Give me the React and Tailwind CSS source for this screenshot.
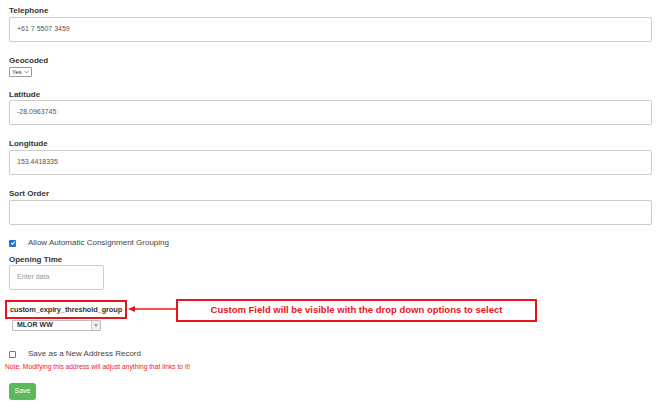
import React from 'react'

const label = "block text-[8px] font-bold leading-[9px] text-[#333]"
const input = "block w-full h-[25px] border border-[#ccc] rounded-[2px] px-[7px] text-[7px] text-[#555] bg-white"

function Field({ name, value, top, gap = 'mb-[1px]' }) {
  return (
    <div className={top}>
      <div className={`${label} ${gap}`}>{name}</div>
      <div className={`${input} flex items-center`}>{value}</div>
    </div>
  )
}

function Check({ checked }) {
  return checked ? (
    <span className="w-[7px] h-[7px] rounded-[1px] bg-[#1a73e8] flex items-center justify-center">
      <svg width="6" height="6" viewBox="0 0 10 10"><path d="M2 5.2 L4.2 7.4 L8 2.8" stroke="white" strokeWidth="1.8" fill="none" /></svg>
    </span>
  ) : (
    <span className="w-[7px] h-[7px] rounded-[1px] border border-[#767676] bg-white" />
  )
}

export default function App() {
  return (
    <div className="w-[670px] h-[408px] bg-white pl-[9px] pr-[18px] pt-[6px] font-['Liberation_Sans',Arial,sans-serif] overflow-hidden">
      <Field name="Telephone" value="+61 7 5507 3459" gap="mb-[2px]" />

      <div className="mt-[14px]">
        <div className={`${label} mb-[2px]`}>Geocoded</div>
        <div className="w-[23px] h-[10px] border border-[#999] rounded-[1px] flex items-center justify-between pl-[2px] pr-[2px] text-[6px] leading-none text-[#333]">
          <span>Yes</span>
          <svg className="shrink-0" width="5" height="4" viewBox="0 0 10 6"><path d="M1 1 L5 5 L9 1" stroke="#555" strokeWidth="1.2" fill="none" /></svg>
        </div>
      </div>

      <Field name="Latitude" value="-28.0963745" top="mt-[13px]" />
      <Field name="Longitude" value="153.4418335" top="mt-[14px]" gap="mb-[2px]" />
      <Field name="Sort Order" value="" top="mt-[14px]" gap="mb-[2px]" />

      <div className="mt-[13px] h-[10px] flex items-center">
        <Check checked />
        <span className="ml-[12px] text-[8px] text-[#444]">Allow Automatic Consignment Grouping</span>
      </div>

      <div className="mt-[7px]">
        <div className={`${label} mb-[1px]`}>Opening Time</div>
        <div className="w-[95px] h-[25px] border border-[#ccc] rounded-[2px] px-[7px] text-[7px] text-[#999] flex items-center">Enter data</div>
      </div>

      <div className="mt-[9px] -ml-[4px] flex items-start">
        <div className="mt-[1px] h-[19px] w-[122px] border-2 border-[#e8141c] flex items-center pl-[3px] text-[7.4px] font-bold text-[#333] whitespace-nowrap tracking-[-0.1px]">
          custom_expiry_threshold_group
        </div>
        <svg className="mt-[6px]" width="49" height="8" viewBox="0 0 49 8">
          <path d="M8 4 H49" stroke="#e8141c" strokeWidth="1.5" />
          <path d="M1 4 L8 1 L8 7 Z" fill="#e8141c" />
        </svg>
        <div className="h-[23px] w-[361px] border-2 border-[#e8141c] flex items-center justify-center text-[9.5px] text-[#e8141c] font-bold">
          Custom Field will be visible with the drop down options to select
        </div>
      </div>

      <div className="-mt-[2px] ml-[3px] w-[89px] h-[11px] border border-[#bbb] rounded-[1px] flex items-center bg-white">
        <span className="flex-1 pl-[4px] text-[7px] font-bold text-[#333]">MLOR WW</span>
        <span className="w-[9px] h-full border-l border-[#ccc] bg-[#eee] flex items-center justify-center">
          <svg width="4" height="3" viewBox="0 0 8 5"><path d="M0 0 H8 L4 5 Z" fill="#888" /></svg>
        </span>
      </div>

      <div className="mt-[18px] h-[10px] flex items-center">
        <Check />
        <span className="ml-[12px] text-[8px] text-[#444]">Save as a New Address Record</span>
      </div>

      <div className="mt-[3px] -ml-[4px] text-[6.7px] text-[#f0141c]">Note: Modifying this address will adjust anything that links to it!</div>

      <div className="mt-[11px] w-[27px] h-[17px] rounded-[3px] bg-[#5cb85c] text-white text-[7px] flex items-center justify-center">Save</div>
    </div>
  )
}
